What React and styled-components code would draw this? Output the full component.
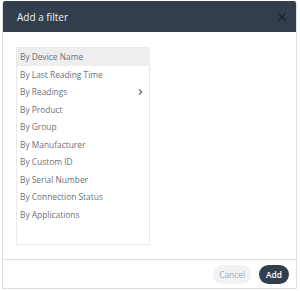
import styled, { createGlobalStyle } from 'styled-components'

const Global = createGlobalStyle`
  body {
    margin: 0;
    background: #ffffff;
    font-family: "Open Sans", "Liberation Sans", sans-serif;
  }
`

const Dialog = styled.div`
  width: 295px;
  height: 288px;
  margin: 1px 0 0 2px;
  box-sizing: border-box;
  border: 1px solid #dcdfe3;
  border-top: none;
  border-radius: 3px 3px 0 0;
  display: flex;
  flex-direction: column;
  background: #fff;
  overflow: hidden;
`

const Header = styled.div`
  height: 31px;
  background: #323e4c;
  display: flex;
  align-items: center;
  justify-content: space-between;
  padding: 0 10px 0 14px;
  flex-shrink: 0;
`

const Title = styled.span`
  color: #eef0f3;
  font-size: 10px;
`

const Close = styled.svg`
  width: 8px;
  height: 8px;
  display: block;
`

const Body = styled.div`
  flex: 1;
  padding: 15px 0 0 13px;
  border-bottom: 1px solid #dde0e4;
`

const List = styled.div`
  width: 134px;
  height: 198px;
  box-sizing: border-box;
  border: 1px solid #e8eaed;
  display: flex;
  flex-direction: column;
`

const Item = styled.div`
  height: 17.5px;
  display: flex;
  align-items: center;
  justify-content: space-between;
  padding: 0 6px 0 3px;
  font-size: 8.4px;
  color: #6c7178;
  background: ${p => (p.$active ? '#eeeeee' : 'transparent')};
`

const Chevron = styled.svg`
  width: 5px;
  height: 6px;
  display: block;
`

const Footer = styled.div`
  height: 28px;
  display: flex;
  align-items: center;
  justify-content: flex-end;
  gap: 8px;
  padding-right: 7px;
  flex-shrink: 0;
`

const Button = styled.button`
  height: 19px;
  border: none;
  border-radius: 10px;
  padding: 0 ${p => (p.$primary ? '7px' : '6px')};
  font-family: "Open Sans", "Liberation Sans", sans-serif;
  font-size: 8.4px;
  font-weight: ${p => (p.$primary ? 600 : 400)};
  background: ${p => (p.$primary ? '#323e4c' : '#f1f2f4')};
  color: ${p => (p.$primary ? '#ffffff' : '#a3a8ae')};
`

const filters = [
  'By Device Name',
  'By Last Reading Time',
  'By Readings',
  'By Product',
  'By Group',
  'By Manufacturer',
  'By Custom ID',
  'By Serial Number',
  'By Connection Status',
  'By Applications',
]

export default function App() {
  return (
    <>
      <Global />
      <Dialog>
        <Header>
          <Title>Add a filter</Title>
          <Close viewBox="0 0 8 8">
            <path d="M0.5 0.5 L7.5 7.5 M7.5 0.5 L0.5 7.5" stroke="#1a212b" strokeWidth="1.2" />
          </Close>
        </Header>
        <Body>
          <List>
            {filters.map((f, i) => (
              <Item key={f} $active={i === 0}>
                {f}
                {f === 'By Readings' && (
                  <Chevron viewBox="0 0 5 6">
                    <path d="M1 0.5 L3.8 3 L1 5.5" fill="none" stroke="#5d636b" strokeWidth="1.1" />
                  </Chevron>
                )}
              </Item>
            ))}
          </List>
        </Body>
        <Footer>
          <Button>Cancel</Button>
          <Button $primary>Add</Button>
        </Footer>
      </Dialog>
    </>
  )
}
